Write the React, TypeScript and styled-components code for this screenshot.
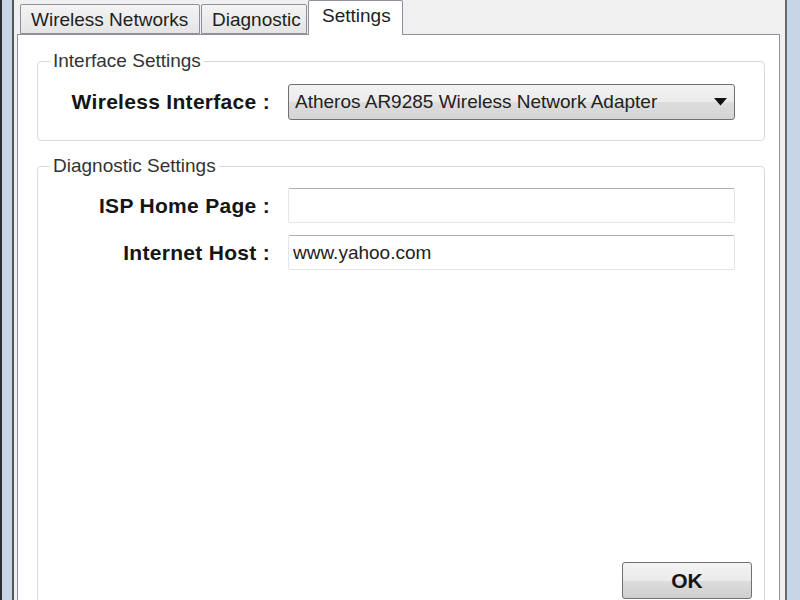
import React from "react";
import styled, { createGlobalStyle } from "styled-components";

const Global = createGlobalStyle`
  html, body { margin: 0; padding: 0; }
  body { width: 800px; height: 600px; overflow: hidden; font-family: "Liberation Sans", Arial, sans-serif; }
`;

const Frame = styled.div`
  box-sizing: border-box;
  height: 600px;
  overflow: hidden;
  display: flex;
  background: #c6d6e6;
  border-left: 2px solid #2e2e2e;
  padding: 0 13px 0 10px;
`;

const Dialog = styled.div`
  flex: 1;
  display: flex;
  flex-direction: column;
  background: #f0f0f0;
  border-left: 2px solid #555;
  border-right: 2px solid #6b6b6b;
  padding: 0 5px 0 3px;
  min-width: 0;
`;

const TabStrip = styled.div`
  display: flex;
  align-items: flex-end;
  height: 34px;
  padding-left: 3px;
  gap: 1px;
`;

const Tab = styled.div<{ $active?: boolean; $w: number }>`
  box-sizing: border-box;
  width: ${(p) => p.$w}px;
  height: ${(p) => (p.$active ? 35 : 30)}px;
  margin-bottom: ${(p) => (p.$active ? -1 : 0)}px;
  position: relative;
  z-index: ${(p) => (p.$active ? 2 : 1)};
  border: 1px solid #8e9199;
  border-bottom: ${(p) => (p.$active ? "none" : "1px solid #8e9199")};
  border-radius: 2px 2px 0 0;
  background: ${(p) =>
    p.$active ? "#ffffff" : "linear-gradient(#f4f4f4, #e4e4e4)"};
  color: #1e1e1e;
  font-size: 19px;
  line-height: 22px;
  padding: ${(p) => (p.$active ? "4px 0 0 13px" : "4px 0 0 10px")};
  white-space: nowrap;
`;

const Panel = styled.div`
  flex: 1;
  background: #ffffff;
  border: 1px solid #8e9199;
  border-bottom: none;
  padding: 15px 14px 0 19px;
  display: flex;
  flex-direction: column;
  gap: 14px;
`;

const Group = styled.fieldset`
  margin: 0;
  padding: 12px 0 20px;
  border: 1px solid #d6dade;
  border-radius: 4px;
  min-inline-size: 0;
`;

const GroupTall = styled(Group)`
  padding-top: 11px;
`;

const Legend = styled.legend`
  margin-left: 12px;
  padding: 0 3px;
  font-size: 19px;
  line-height: 22px;
  color: #333;
`;

const Rows = styled.div`
  display: grid;
  grid-template-columns: 232px 447px;
  column-gap: 18px;
  row-gap: 12px;
  align-items: center;
`;

const Label = styled.div`
  text-align: right;
  font-size: 21px;
  font-weight: bold;
  letter-spacing: 0.3px;
  color: #151515;
  white-space: nowrap;
`;

const Combo = styled.div`
  box-sizing: border-box;
  height: 36px;
  display: flex;
  align-items: center;
  justify-content: space-between;
  padding: 0 7px 0 6px;
  border: 1px solid #707070;
  border-radius: 3px;
  background: linear-gradient(#f3f3f3 0%, #ebebeb 50%, #dddddd 51%, #d4d4d4 100%);
  font-size: 19px;
  color: #222;
  white-space: nowrap;
`;

const TextField = styled.input`
  box-sizing: border-box;
  height: 35px;
  width: 100%;
  margin: 0;
  padding: 0 4px;
  border: 1px solid #e2e5ea;
  border-top-color: #adb0b6;
  border-radius: 2px;
  background: #fff;
  font-family: "Liberation Sans", Arial, sans-serif;
  font-size: 19px;
  color: #222;
  outline: none;
`;

const ButtonRow = styled.div`
  display: flex;
  justify-content: flex-end;
  margin-top: 292px;
  padding-right: 12px;
`;

const OkButton = styled.button`
  box-sizing: border-box;
  width: 130px;
  height: 37px;
  border: 1px solid #707070;
  border-radius: 3px;
  background: linear-gradient(#f3f3f3 0%, #ebebeb 50%, #dddddd 51%, #cfcfcf 100%);
  font-family: "Liberation Sans", Arial, sans-serif;
  font-size: 21px;
  font-weight: bold;
  color: #151515;
  padding: 0;
`;

const Arrow = () => (
  <svg width="13" height="8" viewBox="0 0 13 8">
    <path d="M0 0 H13 L6.5 7.5 Z" fill="#111" />
  </svg>
);

export default function App() {
  return (
    <>
      <Global />
      <Frame>
        <Dialog>
          <TabStrip>
            <Tab $w={180}>Wireless Networks</Tab>
            <Tab $w={106}>Diagnostic</Tab>
            <Tab $w={95} $active>
              Settings
            </Tab>
          </TabStrip>
          <Panel>
            <Group>
              <Legend>Interface Settings</Legend>
              <Rows>
                <Label>Wireless Interface :</Label>
                <Combo>
                  <span>Atheros AR9285 Wireless Network Adapter</span>
                  <Arrow />
                </Combo>
              </Rows>
            </Group>
            <GroupTall>
              <Legend>Diagnostic Settings</Legend>
              <Rows>
                <Label>ISP Home Page :</Label>
                <TextField defaultValue="" />
                <Label>Internet Host :</Label>
                <TextField defaultValue="www.yahoo.com" />
              </Rows>
              <ButtonRow>
                <OkButton>OK</OkButton>
              </ButtonRow>
            </GroupTall>
          </Panel>
        </Dialog>
      </Frame>
    </>
  );
}
